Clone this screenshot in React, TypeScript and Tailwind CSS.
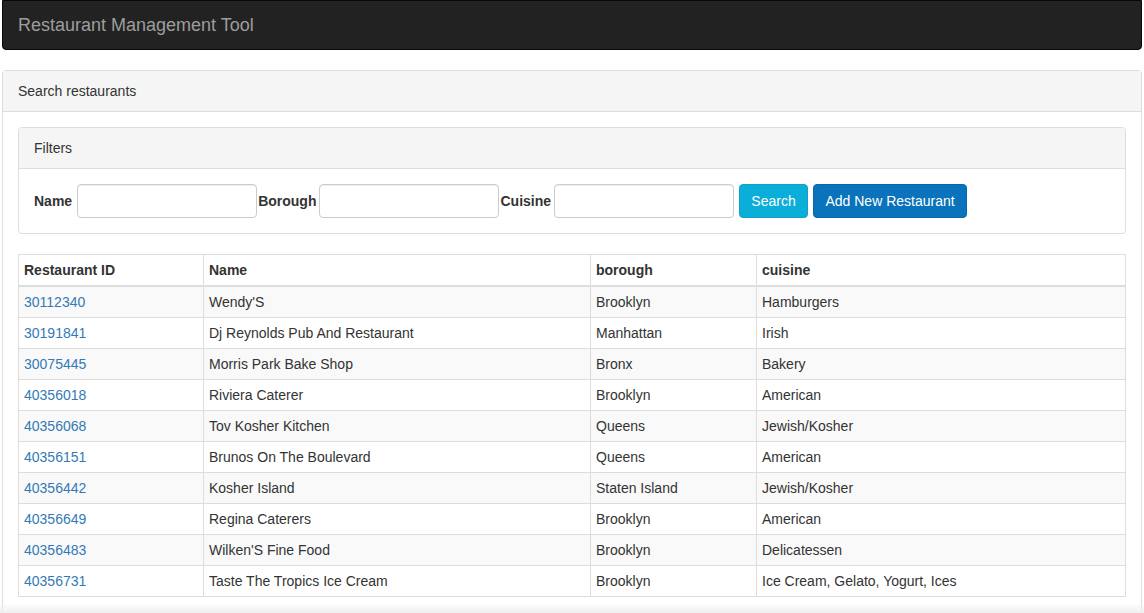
import React from "react";

type Row = { id: string; name: string; borough: string; cuisine: string };

const rows: Row[] = [
  { id: "30112340", name: "Wendy'S", borough: "Brooklyn", cuisine: "Hamburgers" },
  { id: "30191841", name: "Dj Reynolds Pub And Restaurant", borough: "Manhattan", cuisine: "Irish" },
  { id: "30075445", name: "Morris Park Bake Shop", borough: "Bronx", cuisine: "Bakery" },
  { id: "40356018", name: "Riviera Caterer", borough: "Brooklyn", cuisine: "American" },
  { id: "40356068", name: "Tov Kosher Kitchen", borough: "Queens", cuisine: "Jewish/Kosher" },
  { id: "40356151", name: "Brunos On The Boulevard", borough: "Queens", cuisine: "American" },
  { id: "40356442", name: "Kosher Island", borough: "Staten Island", cuisine: "Jewish/Kosher" },
  { id: "40356649", name: "Regina Caterers", borough: "Brooklyn", cuisine: "American" },
  { id: "40356483", name: "Wilken'S Fine Food", borough: "Brooklyn", cuisine: "Delicatessen" },
  { id: "40356731", name: "Taste The Tropics Ice Cream", borough: "Brooklyn", cuisine: "Ice Cream, Gelato, Yogurt, Ices" },
];

export default function App() {
  const input = "h-[34px] w-[180px] rounded-[4px] border border-[#ccc] bg-white px-3 text-sm shadow-[inset_0_1px_1px_rgba(0,0,0,0.075)] outline-none";
  const label = "text-sm font-bold text-[#333]";
  const td = "border border-[#ddd] px-[5px] py-[5px] leading-5";

  return (
    <div className="min-h-[613px] bg-white text-sm text-[#333]" style={{ fontFamily: '"Liberation Sans", Arial, sans-serif' }}>
      <nav className="mx-[2px] flex h-[50px] items-center rounded-b-[4px] border border-[#080808] bg-[#222] px-[15px]">
        <span className="text-lg leading-5 text-[#9d9d9d]">Restaurant Management Tool</span>
      </nav>

      <div className="mx-[2px] mt-5 rounded-t-[4px] border border-b-0 border-[#ddd] bg-white">
        <div className="border-b border-[#ddd] bg-[#f5f5f5] px-[15px] py-[10px] leading-5">Search restaurants</div>
        <div className="p-[15px]">
          <div className="rounded-[4px] border border-[#ddd]">
            <div className="rounded-t-[4px] border-b border-[#ddd] bg-[#f5f5f5] px-[15px] py-[10px] leading-5">Filters</div>
            <div className="flex items-center p-[15px]">
              <label className={label}>Name</label>
              <input className={`${input} ml-[5px]`} />
              <label className={`${label} ml-[1px]`}>Borough</label>
              <input className={`${input} ml-[3px]`} />
              <label className={`${label} ml-[1px]`}>Cuisine</label>
              <input className={`${input} ml-[3px]`} />
              <button className="ml-[5px] h-[34px] w-[69px] rounded-[4px] border border-[#0aa3cc] bg-[#0aaed9] text-sm text-white">Search</button>
              <button className="ml-[5px] h-[34px] w-[154px] rounded-[4px] border border-[#0867a8] bg-[#0a73bb] text-sm text-white">Add New Restaurant</button>
            </div>
          </div>

          <table className="mt-5 w-full border-collapse border border-[#ddd]">
            <thead>
              <tr>
                <th className={`${td} w-[185px] border-b-2 text-left font-bold`}>Restaurant ID</th>
                <th className={`${td} w-[387px] border-b-2 text-left font-bold`}>Name</th>
                <th className={`${td} w-[166px] border-b-2 text-left font-bold`}>borough</th>
                <th className={`${td} border-b-2 text-left font-bold`}>cuisine</th>
              </tr>
            </thead>
            <tbody>
              {rows.map((r, i) => (
                <tr key={r.id} className={i % 2 === 0 ? "bg-[#f9f9f9]" : "bg-white"}>
                  <td className={td}><a className="text-[#337ab7]" href="#">{r.id}</a></td>
                  <td className={td}>{r.name}</td>
                  <td className={td}>{r.borough}</td>
                  <td className={td}>{r.cuisine}</td>
                </tr>
              ))}
            </tbody>
          </table>
        </div>
      </div>

      <div className="pointer-events-none fixed bottom-0 left-0 h-[10px] w-full bg-gradient-to-b from-white/0 to-[#efefef]" />
    </div>
  );
}
